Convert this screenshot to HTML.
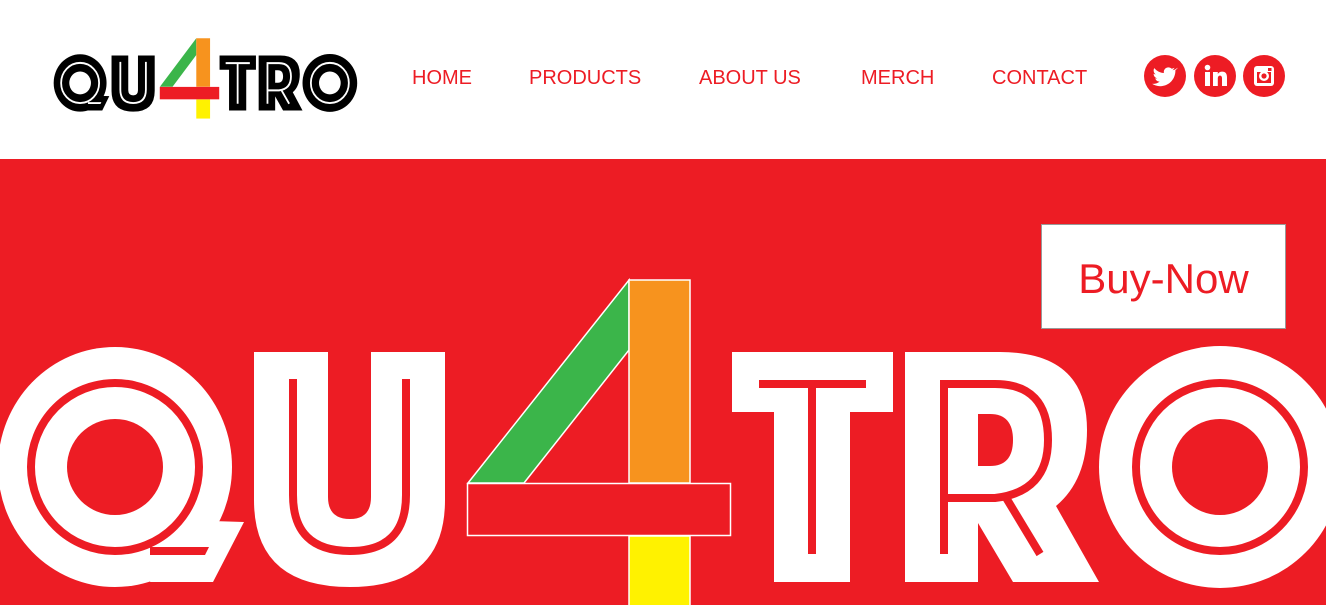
<!DOCTYPE html>
<html><head><meta charset="utf-8"><style>
html,body{margin:0;padding:0;width:1326px;height:605px;overflow:hidden;background:#fff;font-family:"Liberation Sans",Arial,sans-serif}
.nav{position:absolute;top:67px;font-size:20px;color:#ed1c24;line-height:22px;white-space:nowrap}
.hero{position:absolute;left:0;top:159px;width:1326px;height:446px;background:#ed1c24}
.buy{position:absolute;left:1041px;top:224px;width:243px;height:103px;background:#fff;border:1px solid #999;color:#ed1c24;font-size:42px;text-align:center;line-height:107px;box-sizing:content-box}
.s{position:absolute;top:55px;width:42px;height:42px;border-radius:50%;background:#ed1c24}
</style></head><body>
<svg width="0" height="0" style="position:absolute">
<defs>
<g id="L">
 <ellipse cx="115" cy="467" rx="117" ry="120" style="fill:var(--a)"/>
 <polygon points="180,520 244,522 213,582 150,582" style="fill:var(--a)"/>
 <ellipse cx="115" cy="467" rx="84" ry="84" style="fill:none;stroke:var(--b)" stroke-width="8"/>
 <ellipse cx="115" cy="467" rx="48" ry="48" style="fill:var(--b)"/>
 <polygon points="150,547 209,547 205,555 150,555" style="fill:var(--b)"/>
 <path d="M254 352H445V500Q445 587 350 587Q254 587 254 500Z" style="fill:var(--a)"/>
 <path d="M328 352H371V497Q371 519 350 519Q328 519 328 497Z" style="fill:var(--b)"/>
 <path d="M293 379V495Q293 551 350 551Q406 551 406 495V379" style="fill:none;stroke:var(--b)" stroke-width="8"/>
 <polygon points="732,352 893,352 893,412 850,412 850,582 774,582 774,412 732,412" style="fill:var(--a)"/>
 <path d="M759 384H866M812 384V554" style="fill:none;stroke:var(--b)" stroke-width="8"/>
 <path d="M905 352H1000Q1087 352 1087 430Q1087 480 1056 506L1099 582H1013L978 523V582H905Z" style="fill:var(--a)"/>
 <path d="M978 414H990Q1013 414 1013 440Q1013 466 990 466H978Z" style="fill:var(--b)"/>
 <path d="M944 554V384H995Q1048 384 1048 440Q1048 492 995 498H944M1005 496L1040 554" style="fill:none;stroke:var(--b)" stroke-width="8"/>
 <ellipse cx="1220" cy="467" rx="121" ry="121" style="fill:var(--a)"/>
 <ellipse cx="1220" cy="467" rx="84" ry="84" style="fill:none;stroke:var(--b)" stroke-width="8"/>
 <ellipse cx="1220" cy="467" rx="48" ry="48" style="fill:var(--b)"/>
 <polygon points="468,483 629,280 629,350 524,483" fill="#3bb54a" style="stroke:var(--c)" stroke-width="1.5"/>
 <rect x="629" y="280" width="61" height="203" fill="#f7931e" style="stroke:var(--c)" stroke-width="1.5"/>
 <rect x="629" y="536" width="61" height="80" fill="#fff200" style="stroke:var(--c)" stroke-width="1.5"/>
 <rect x="467.5" y="483.5" width="263" height="52" fill="#ed1c24" style="stroke:var(--c)" stroke-width="1.5"/>
</g>
</defs></svg>

<svg style="position:absolute;left:0;top:0" width="420" height="140">
 <g transform="translate(53,38.5) scale(0.226,0.239) translate(5,-281)" style="--a:#000;--b:#fff;--c:none">
  <use href="#L"/>
 </g>
</svg>

<div class="nav" style="left:412px">HOME</div>
<div class="nav" style="left:529px">PRODUCTS</div>
<div class="nav" style="left:699px">ABOUT US</div>
<div class="nav" style="left:861px">MERCH</div>
<div class="nav" style="left:992px">CONTACT</div>

<div class="s" style="left:1144px"><svg width="42" height="42" viewBox="0 0 42 42"><path d="M31 14.5c-.8.4-1.6.6-2.5.7.9-.5 1.6-1.4 1.9-2.4-.8.5-1.8.8-2.7 1-1.8-1.9-4.8-1.9-6.6-.1-.9.9-1.3 2-1.3 3.3 0 .4 0 .7.1 1-3.8-.2-7.2-2-9.6-4.9-1.3 2.1-.6 4.9 1.4 6.2-.7 0-1.4-.2-2.1-.6 0 2.2 1.6 4.2 3.7 4.6-.7.2-1.4.2-2.1.1.6 1.9 2.4 3.2 4.4 3.2-1.9 1.5-4.2 2.3-6.6 2.3-.4 0-.8 0-1.1-.1 2.5 1.6 5.3 2.4 8.2 2.4 9.9 0 15.3-8.2 15.3-15.3v-.7c1-.7 1.8-1.6 2.5-2.6z" fill="#fff"/></svg></div>
<div class="s" style="left:1194px"><svg width="42" height="42" viewBox="0 0 42 42"><circle cx="13.5" cy="12.5" r="2.8" fill="#fff"/><rect x="11" y="17" width="5" height="14" fill="#fff"/><path d="M19 17h4.8v2c.8-1.4 2.4-2.4 4.4-2.4 3.4 0 4.8 2.2 4.8 5.8V31h-5v-7.6c0-1.8-.6-2.8-2-2.8s-2.2 1-2.2 2.8V31H19z" fill="#fff"/></svg></div>
<div class="s" style="left:1243px"><svg width="42" height="42" viewBox="0 0 42 42"><rect x="11" y="11" width="20" height="20" rx="3" fill="#fff"/><rect x="14" y="17" width="14" height="11" fill="#ed1c24"/><circle cx="21" cy="21" r="5" fill="#fff"/><circle cx="21" cy="21" r="2.6" fill="#ed1c24"/><rect x="25" y="13" width="3.5" height="3" fill="#ed1c24"/></svg></div>

<div class="hero"></div>
<svg style="position:absolute;left:0;top:0" width="1326" height="605">
 <g style="--a:#fff;--b:#ed1c24;--c:#fff"><use href="#L"/></g>
</svg>
<div class="buy">Buy-Now</div>
</body></html>
